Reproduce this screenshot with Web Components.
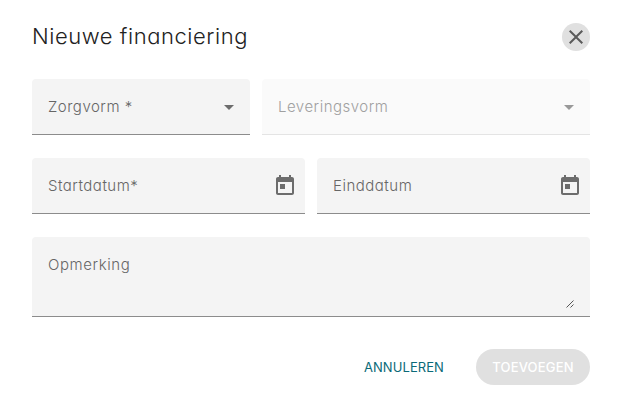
<!DOCTYPE html>
<html lang="nl">
<head>
<meta charset="utf-8">
<title>Nieuwe financiering</title>
<style>
    body {
        margin: 0;
        background: #fff;
        font-family: Inter, "Liberation Sans", sans-serif;
        font-feature-settings: "cv11";
    }
</style>
</head>
<body>
<finance-dialog></finance-dialog>

<script>
class IconButton extends HTMLElement {
    constructor() {
        super();
        this.attachShadow({ mode: 'open' }).innerHTML = `
            <style>
                :host {
                    display: block;
                    flex: none;
                    width: 28px;
                    height: 28px;
                }

                button {
                    display: flex;
                    align-items: center;
                    justify-content: center;
                    width: 100%;
                    height: 100%;
                    padding: 0;
                    border: none;
                    border-radius: 50%;
                    background: #e0e0e0;
                    cursor: pointer;
                }
            </style>
            <button aria-label="Sluiten">
                <svg width="24" height="24" viewBox="0 0 24 24" fill="#5a5a5a">
                    <path d="M19 6.41 17.59 5 12 10.59 6.41 5 5 6.41 10.59 12 5 17.59 6.41 19 12 13.41 17.59 19 19 17.59 13.41 12z"/>
                </svg>
            </button>
        `;
    }
}

class FormField extends HTMLElement {
    connectedCallback() {
        const icons = {
            select: `<svg width="10" height="5" viewBox="0 0 10 5"><path d="M0 0h10L5 5z"/></svg>`,
            date: `<svg width="24" height="24" viewBox="0 0 24 24"><path d="M19 3h-1V1h-2v2H8V1H6v2H5c-1.11 0-1.99.9-1.99 2L3 19c0 1.1.89 2 2 2h14c1.1 0 2-.9 2-2V5c0-1.1-.9-2-2-2zm0 16H5V8h14v11zM7 10h5v5H7z"/></svg>`,
            textarea: `<svg width="8" height="8" viewBox="0 0 8 8" fill="none" stroke="#555"><path d="M.5 7.5l7-7M4.500 7.5l3-3"/></svg>`
        };

        this.attachShadow({ mode: 'open' }).innerHTML = `
            <style>
                :host {
                    display: flex;
                    align-items: center;
                    justify-content: space-between;
                    box-sizing: border-box;
                    height: 56px;
                    padding: 1px 16px 0;
                    border-bottom: 1px solid #8c8c8c;
                    border-radius: 4px 4px 0 0;
                    background: #f4f4f4;
                    color: #666;
                    fill: #6c6c6c;
                }

                :host([disabled]) {
                    border-color: #e4e4e4;
                    background: #fafafa;
                    color: #a0a0a0;
                    fill: #999;
                }

                :host([type="textarea"]) {
                    height: 80px;
                    align-items: stretch;
                }

                label {
                    font-size: 15px;
                    font-weight: 350;
                    line-height: 24px;
                    letter-spacing: 0.5px;
                    white-space: pre;
                }

                :host([type="textarea"]) label {
                    padding-top: 15px;
                    letter-spacing: 0.6px;
                }

                svg {
                    display: block;
                }

                :host([type="select"]) svg {
                    margin-top: 1px;
                }

                :host([type="date"]) svg {
                    margin-right: -8px;
                }

                :host([type="textarea"]) svg {
                    align-self: flex-end;
                    margin-bottom: 8px;
                }
            </style>
            <label><slot></slot></label>
            ${icons[this.getAttribute('type')]}
        `;
    }
}

class TextButton extends HTMLElement {
    constructor() {
        super();
        this.attachShadow({ mode: 'open' }).innerHTML = `
            <style>
                :host {
                    display: block;
                }

                button {
                    width: 100%;
                    height: 36px;
                    padding: 0 16px;
                    border: none;
                    border-radius: 18px;
                    background: none;
                    color: #0b6a78;
                    font: inherit;
                    font-size: 13px;
                    letter-spacing: 0.08px;
                    white-space: nowrap;
                }

                :host([disabled]) button {
                    padding: 0;
                    background: #e0e0e0;
                    color: #fff;
                    font-weight: 500;
                    letter-spacing: 0.2px;
                }
            </style>
            <button><slot></slot></button>
        `;
    }
}

class FinanceDialog extends HTMLElement {
    constructor() {
        super();
        this.attachShadow({ mode: 'open' }).innerHTML = `
            <style>
                :host {
                    display: flex;
                    flex-direction: column;
                    box-sizing: border-box;
                    width: 619px;
                    height: 400px;
                    padding: 23px 29px 15px 32px;
                }

                header {
                    display: flex;
                    align-items: flex-start;
                    justify-content: space-between;
                    height: 28px;
                    margin-bottom: 28px;
                }

                h1 {
                    margin: 0;
                    color: #222;
                    font-size: 22px;
                    font-weight: 275;
                    line-height: 26px;
                    letter-spacing: 0.55px;
                }

                form {
                    display: grid;
                    gap: 23px;
                }

                .row {
                    display: grid;
                    grid-template-columns: 1fr 1fr;
                    gap: 12px;
                }

                .row.care {
                    grid-template-columns: 218px 1fr;
                }

                footer {
                    display: flex;
                    justify-content: flex-end;
                    gap: 16px;
                    margin-top: 32px;
                }

                .submit {
                    width: 114px;
                }
            </style>
            <header>
                <h1>Nieuwe financiering</h1>
                <icon-button></icon-button>
            </header>
            <form>
                <div class="row care">
                    <form-field type="select">Zorgvorm *</form-field>
                    <form-field type="select" disabled>Leveringsvorm</form-field>
                </div>
                <div class="row">
                    <form-field type="date">Startdatum*</form-field>
                    <form-field type="date">Einddatum</form-field>
                </div>
                <form-field type="textarea">Opmerking</form-field>
            </form>
            <footer>
                <text-button>ANNULEREN</text-button>
                <text-button class="submit" disabled>TOEVOEGEN</text-button>
            </footer>
        `;
    }
}

customElements.define('icon-button', IconButton);
customElements.define('form-field', FormField);
customElements.define('text-button', TextButton);
customElements.define('finance-dialog', FinanceDialog);
</script>
</body>
</html>
